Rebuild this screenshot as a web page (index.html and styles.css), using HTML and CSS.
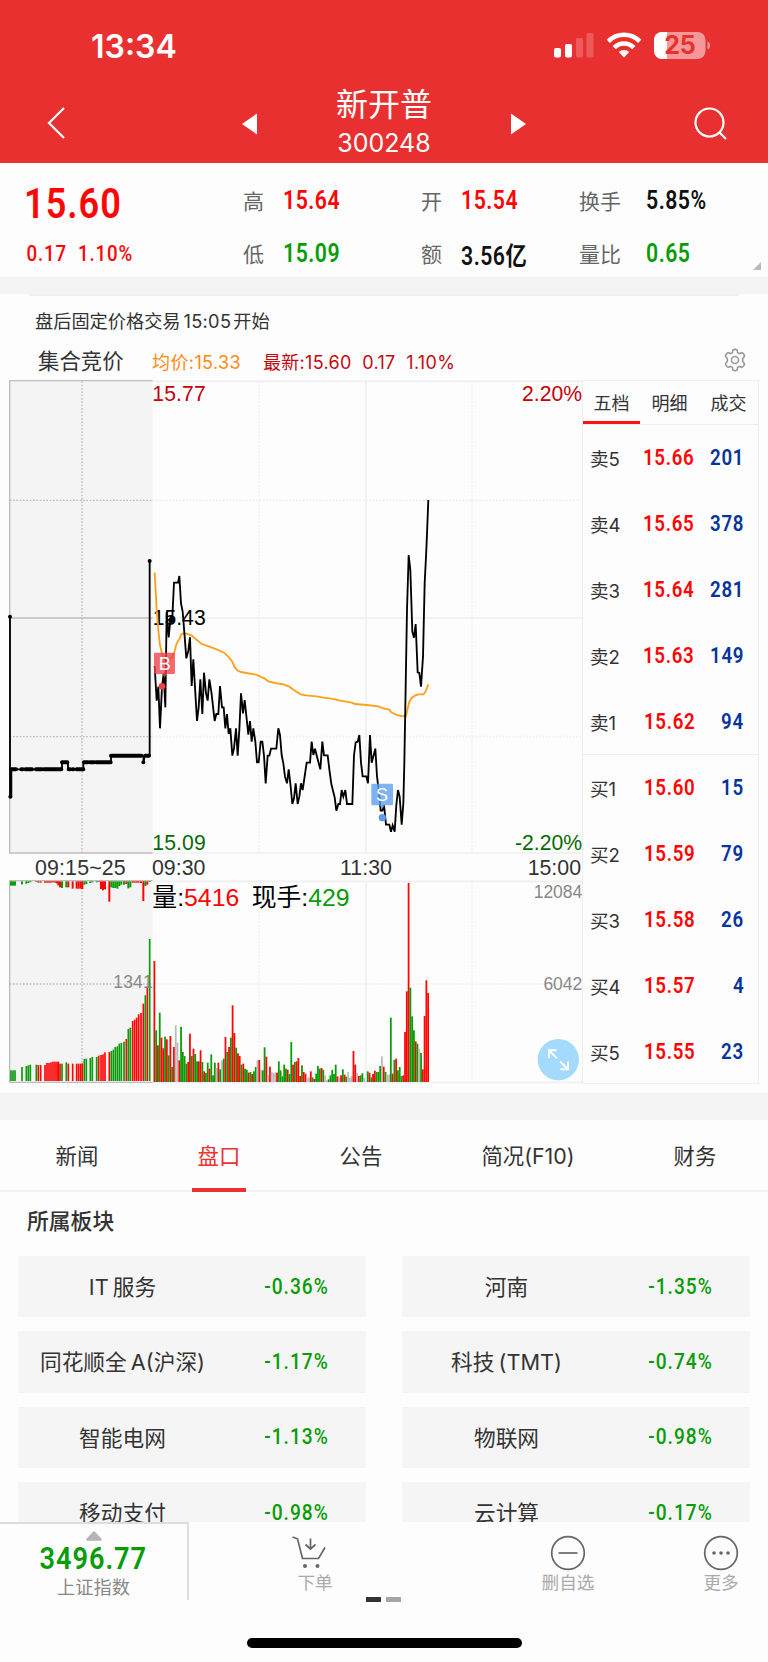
FILE: index.html
```
<!DOCTYPE html>
<html lang="zh-CN">
<head>
  <meta charset="UTF-8" />
  <title>新开普 300248</title>
  <meta name="viewport" content="width=device-width, initial-scale=1.0" />
  <link rel="stylesheet" href="styles.css">
</head>
<body>
  <header class="header">
    <div class="status">
      <span class="status__time">13:34</span>
      <svg class="status__icons" width="160" height="32" viewBox="0 0 160 32" fill="#fff">
        <rect x="3" y="18" width="7" height="9.5" rx="1.8" />
        <rect x="14" y="14" width="7" height="13.5" rx="1.8" />
        <g opacity=".2">
          <rect x="25" y="8" width="7" height="19.5" rx="1.8" />
          <rect x="35.500" y="3" width="7" height="24.5" rx="1.8" />
        </g>
        <g fill="none" stroke="#fff" stroke-width="4.6">
          <path d="M57.300 11.300a22 22 0 0 1 31.400 0" />
          <path d="M63.200 17.600a13.700 13.700 0 0 1 19.600 0" />
        </g>
        <path d="M73 27.500l-5.300-5.400a7.500 7.500 0 0 1 10.600 0z" />
        <rect x="103" y="2" width="51.500" height="27" rx="8" opacity=".5" />
        <path d="M111 2h5v27h-5a8 8 0 0 1-8-8V10a8 8 0 0 1 8-8z" />
        <path d="M156.500 11.500c3.500 1.500 3.500 6.500 0 8z" opacity=".5" />
        <text class="status__battery" x="129" y="24" text-anchor="middle">25</text>
      </svg>
    </div>
    <div class="nav">
      <svg class="nav__back" width="20" height="34" viewBox="0 0 20 34"><path d="M18 2L3 17 18 32" /></svg>
      <svg class="nav__prev" width="15" height="22" viewBox="0 0 15 22"><path d="M0 11L15 .500v21z" /></svg>
      <div class="nav__title">
        <h1>新开普</h1>
        <p>300248</p>
      </div>
      <svg class="nav__next" width="15" height="22" viewBox="0 0 15 22"><path d="M15 11L0 .500v21z" /></svg>
      <svg class="nav__search" width="36" height="36" viewBox="0 0 36 36"><circle cx="16.500" cy="16.500" r="14" /><path d="M26.500 26.500l6.500 6.500" /></svg>
    </div>
  </header>

  <section class="quote">
    <div class="quote__main">
      <b class="num up">15.60</b>
      <span class="num up">0.17&nbsp; 1.10%</span>
    </div>
    <dl class="quote__col col1">
      <dt>高</dt><dd class="num up">15.64</dd>
      <dt>低</dt><dd class="num down">15.09</dd>
    </dl>
    <dl class="quote__col col2">
      <dt>开</dt><dd class="num up">15.54</dd>
      <dt>额</dt><dd class="num">3.56<i>亿</i></dd>
    </dl>
    <dl class="quote__col col3">
      <dt>换手</dt><dd class="num">5.85%</dd>
      <dt>量比</dt><dd class="num down">0.65</dd>
    </dl>
    <span class="quote__more"></span>
  </section>

  <section class="market">
    <p class="notice">盘后固定价格交易<span>15:05</span>开始</p>
    <div class="legend">
      <strong>集合竞价</strong>
      <span class="legend__avg">均价:15.33</span>
      <span class="legend__last">最新:15.60&nbsp; 0.17&nbsp; 1.10%</span>
      <svg class="legend__gear" width="24" height="24" viewBox="0 0 24 24">
        <path d="M9.800 2.200Q12 .600 14.200 2.200L14.600 4.600 16.600 5.600 19 4.700Q21.600 5.800 21.400 8.500L19.700 10.500V13.500L21.400 15.500Q21.600 18.200 19 19.300L16.600 18.400 14.600 19.400 14.200 21.800Q12 23.400 9.800 21.800L9.400 19.400 7.400 18.400 5 19.300Q2.400 18.200 2.600 15.500L4.300 13.500V10.500L2.600 8.500Q2.400 5.800 5 4.700L7.400 5.600 9.400 4.600z" />
        <circle cx="12" cy="12" r="3.500" />
      </svg>
    </div>
    <div class="board">
      <!-- canvas units are 3 per css pixel -->
      <svg class="chart" width="582" height="704" viewBox="0 0 1746 2112">
        <rect class="pre" x="29" y="2" width="429" height="1417" />
        <rect class="pre" x="29" y="1502" width="429" height="604" />
        <g class="grid">
          <path d="M458 4H1746M458 714H1746M458 1419H1746M458 1504H1746M458 2107H1746M1098 4V1419M1098 1504V2107" />
          <path class="dots" d="M458 361H1746M458 1070H1746M458 1812H1746M777 4V1419M1416 4V1419M777 1504V2107M1416 1504V2107" />
        </g>
        <g class="grid grid--pre">
          <path d="M458 2H29V1419H458M29 714H458M29 1500V2107H458M29 1502H458" />
          <path class="dots" d="M29 361H458M29 1070H458M29 1812H458M246 4V1419M246 1504V2107" />
        </g>

        <g id="auction"></g>
        <g id="volume"></g>

        <g class="label">
          <text class="high" x="457" y="64" textLength="160">15.77</text>
          <text class="high" x="1746" y="64" text-anchor="end">2.20%</text>
          <text x="458" y="736" textLength="159">15.43</text>
          <text class="low" x="457" y="1409" textLength="160">15.09</text>
          <text class="low" x="1746" y="1409" text-anchor="end">-2.20%</text>
          <text class="axis" x="105" y="1485" textLength="272">09:15~25</text>
          <text class="axis" x="456" y="1485">09:30</text>
          <text class="axis" x="1098" y="1485" text-anchor="middle">11:30</text>
          <text class="axis" x="1743" y="1485" text-anchor="end">15:00</text>
          <text class="scale" x="340" y="1824" textLength="118">1341</text>
          <text class="scale" x="1747" y="1554" text-anchor="end">12084</text>
          <text class="scale" x="1747" y="1831" text-anchor="end">6042</text>
        </g>
        <text class="total" x="457" y="1578">量:<tspan class="t-up">5416</tspan></text>
        <text class="total" x="755" y="1578">现手:<tspan class="t-down">429</tspan></text>

        <polyline class="auction" points="30,710 30,1250 34,1250 34,1168 186,1168 186,1147 204,1147 204,1168 250,1168 250,1147 333,1147 333,1127 430,1127 431,1147 434,1127 449,1127 449,543" />
        <path class="auction-dots" d="M34 1168H48M64 1168H68M76 1168H96M108 1168H126M132 1168H184M186 1147H202M206 1168H210M218 1168H220M230 1168H250M252 1147H264M270 1147H282M288 1147H332M333 1127H424M436 1127H447M430 1147V1147M449 543V543M30 710V710M31 1250V1250" />
        <polyline class="avg" points="464,578 470,690 475,750 480,795 486,822 495,842 505,840 515,832 522,820 530,790 538,778 543,764 550,760 560,761 575,767 605,792 620,797 650,808 672,818 685,830 697,845 703,860 712,871 722,876 740,879 768,884 780,889 793,895 805,904 825,909 850,913 868,920 878,928 902,943 918,946 950,949 970,953 995,956 1020,962 1055,968 1065,972 1100,975 1135,979 1150,985 1168,989 1174,997 1190,1005 1205,1008 1218,1009 1222,990 1228,965 1235,954 1245,947 1255,943 1270,943 1276,936 1285,913" />
        <polyline class="price" points="464,858 470,962 475,920 480,1045 486,920 491,880 496,982 500,695 506,772 512,710 517,712 522,608 534,608 538,588 543,670 548,695 554,770 559,835 565,812 570,772 575,918 580,838 591,1023 596,982 601,898 607,1002 612,878 618,940 623,962 628,898 634,935 644,1023 649,1002 655,1002 660,918 666,982 671,982 676,1045 681,1002 686,1062 691,1045 697,1127 702,1105 708,1045 713,1127 718,1050 723,940 729,1000 734,960 745,1064 750,1023 755,1085 760,1045 766,1085 771,1147 776,1147 782,1085 787,1085 792,1127 797,1210 803,1127 808,1127 813,1106 829,1106 835,1045 840,1065 845,1125 850,1150 855,1190 861,1210 866,1168 872,1220 877,1272 882,1255 887,1210 893,1272 898,1250 903,1210 908,1230 920,1148 930,1148 935,1085 940,1125 945,1106 951,1130 961,1168 967,1085 972,1126 983,1126 988,1168 994,1212 1004,1252 1009,1292 1015,1272 1020,1272 1025,1230 1030,1250 1036,1230 1041,1272 1057,1272 1062,1126 1067,1087 1073,1085 1078,1065 1083,1148 1088,1189 1099,1189 1104,1210 1110,1065 1115,1148 1126,1106 1131,1189 1136,1230 1142,1292 1147,1292 1152,1275 1158,1334 1168,1334 1173,1355 1178,1336 1184,1355 1189,1275 1194,1230 1199,1250 1205,1334 1210,1270 1213,1150 1217,920 1221,690 1226,525 1231,570 1237,755 1242,773 1247,732 1253,877 1258,879 1263,920 1269,830 1274,610 1279,510 1285,360" />
        <path class="cross" d="M514 708l11 12-11 12-11-12z" />

        <g class="mark mark--buy">
          <path d="M466 818h55a4 4 0 0 1 4 4v56a4 4 0 0 1-4 4h-19l-8 10-8-10h-20a4 4 0 0 1-4-4v-56a4 4 0 0 1 4-4z" />
          <circle cx="486" cy="919" r="10" />
          <text x="494" y="869">B</text>
        </g>
        <g class="mark mark--sell">
          <path d="M1118 1211h57a4 4 0 0 1 4 4v57a4 4 0 0 1-4 4h-20l-8 10-8-10h-21a4 4 0 0 1-4-4v-57a4 4 0 0 1 4-4z" />
          <circle cx="1147" cy="1313" r="11" />
          <text x="1146" y="1263">S</text>
        </g>
        <g class="expand">
          <circle cx="1675" cy="2039" r="62" />
          <path d="M1671 2035l-23-23M1647 2034v-23h23M1680 2044l23 23M1704 2045v23h-23" />
        </g>
      </svg>

      <div class="depth">
        <div class="depth__tabs"><span class="on">五档</span><span>明细</span><span>成交</span></div>
        <ul class="depth__list">
          <li><span>卖5</span><b class="num up">15.66</b><b class="num vol">201</b></li>
          <li><span>卖4</span><b class="num up">15.65</b><b class="num vol">378</b></li>
          <li><span>卖3</span><b class="num up">15.64</b><b class="num vol">281</b></li>
          <li><span>卖2</span><b class="num up">15.63</b><b class="num vol">149</b></li>
          <li><span>卖1</span><b class="num up">15.62</b><b class="num vol">94</b></li>
        </ul>
        <ul class="depth__list">
          <li><span>买1</span><b class="num up">15.60</b><b class="num vol">15</b></li>
          <li><span>买2</span><b class="num up">15.59</b><b class="num vol">79</b></li>
          <li><span>买3</span><b class="num up">15.58</b><b class="num vol">26</b></li>
          <li><span>买4</span><b class="num up">15.57</b><b class="num vol">4</b></li>
          <li><span>买5</span><b class="num up">15.55</b><b class="num vol">23</b></li>
        </ul>
      </div>
    </div>
  </section>

  <section class="info">
    <nav class="tabs">
      <a>新闻</a><a class="on">盘口</a><a>公告</a><a>简况(F10)</a><a>财务</a>
    </nav>
    <h2>所属板块</h2>
    <div class="sectors">
      <div class="sector"><span>IT 服务</span><b class="num down">-0.36%</b></div>
      <div class="sector"><span>河南</span><b class="num down">-1.35%</b></div>
      <div class="sector"><span>同花顺全 A(沪深)</span><b class="num down">-1.17%</b></div>
      <div class="sector"><span>科技 (TMT)</span><b class="num down">-0.74%</b></div>
      <div class="sector"><span>智能电网</span><b class="num down">-1.13%</b></div>
      <div class="sector"><span>物联网</span><b class="num down">-0.98%</b></div>
      <div class="sector"><span>移动支付</span><b class="num down">-0.98%</b></div>
      <div class="sector"><span>云计算</span><b class="num down">-0.17%</b></div>
    </div>
  </section>

  <footer class="footer">
    <div class="toolbar">
      <div class="index">
        <svg width="16" height="10" viewBox="0 0 16 10"><path d="M7 .800q1-1 2 0l6.500 7q.800 2-1 2h-13q-1.800 0-1-2z" fill="#b4b4b4" /></svg>
        <b class="num down">3496.77</b>
        <span>上证指数</span>
      </div>
      <div class="tool tool--order">
        <svg width="36" height="36" viewBox="0 0 36 36">
          <path d="M1.500 2l5 1.800L11.500 23.500h16l6.500-11M19.500 3.500v10.500M14.500 9.500l5 4.500 5-4.500" />
          <g class="solid"><circle cx="14" cy="31" r="2" /><circle cx="26.500" cy="31" r="2" /></g>
        </svg>
        <span>下单</span>
      </div>
      <div class="tool tool--remove">
        <svg width="36" height="36" viewBox="0 0 36 36"><circle cx="18" cy="18" r="16.300" /><path d="M8.500 18h19" /></svg>
        <span>删自选</span>
      </div>
      <div class="tool tool--more">
        <svg width="36" height="36" viewBox="0 0 36 36"><circle cx="18" cy="18" r="16.300" /><g class="solid"><circle cx="11" cy="18" r="1.800" /><circle cx="18" cy="18" r="1.800" /><circle cx="25" cy="18" r="1.800" /></g></svg>
        <span>更多</span>
      </div>
    </div>
    <div class="pager"><i class="on"></i><i></i></div>
    <div class="home"></div>
  </footer>

  <script src="chart.js"></script>
</body>
</html>
```
FILE: styles.css
```
* {
  box-sizing: border-box;
  margin: 0;
  padding: 0;
}
body {
  width: 768px;
  height: 1662px;
  overflow: hidden;
  display: flex;
  flex-direction: column;
  font-family: Inter, "Noto Sans CJK SC", sans-serif;
  background: #fdfdfd;
  color: #333;
}
svg {
  display: block;
  flex: none;
}
ul {
  list-style: none;
}
.num {
  font-family: Roboto, "Noto Sans CJK SC", sans-serif;
  font-weight: 600;
  color: #111;
  transform: scaleX(.85);
  transform-origin: left;
  letter-spacing: .6px;
  white-space: nowrap;
}
.num.up { color: #fd0504; }
.num.down { color: #089c08; }
.num.vol { color: #04349c; }

/* header */
.header {
  height: 163px;
  flex: none;
  background: #e93030;
  color: #fff;
}
.status {
  height: 78px;
  padding: 30px 57px 0 91px;
  display: flex;
  justify-content: space-between;
}
.status__time {
  font-size: 32px;
  font-weight: 600;
  line-height: 34px;
}
.status__battery {
  font-size: 25px;
  font-weight: 700;
  fill: #e93030;
}
.nav {
  height: 85px;
  padding: 0 39px 0 46px;
  display: flex;
  align-items: center;
}
.nav__back, .nav__search {
  fill: none;
  stroke: #fff;
  stroke-width: 2.2;
}
.nav__back { margin-top: 5px; }
.nav__search { margin: 6px 0 0 auto; }
.nav__prev, .nav__next {
  fill: #fff;
  margin-top: 6px;
}
.nav__prev { margin-left: 176px; }
.nav__title {
  width: 254px;
  padding-top: 5px;
  text-align: center;
}
.nav__title h1 {
  font-size: 32px;
  font-weight: 400;
  line-height: 40px;
}
.nav__title p {
  font-size: 25px;
  line-height: 37px;
}

/* quote */
.quote {
  position: relative;
  height: 114px;
  flex: none;
  display: flex;
  padding: 10px 0 0 24px;
}
.quote__main {
  width: 219px;
}
.quote__main b {
  display: block;
  font-size: 42.500px;
  line-height: 62px;
  letter-spacing: 1.200px;
}
.quote__main span {
  display: block;
  font-size: 22px;
  font-weight: 500;
  line-height: 38px;
  padding-left: 3px;
  letter-spacing: 1px;
}
.quote__col {
  display: grid;
  grid-template-columns: 40px 1fr;
  grid-template-rows: 53px 53px;
  align-items: center;
  font-size: 21px;
  color: #666;
}
.quote__col dd {
  font-size: 25px;
  padding-top: 2px;
}
.quote__col i { font-style: normal; }
.col1 { width: 178px; }
.col2 { width: 158px; }
.col3 { grid-template-columns: 67px 1fr; }
.quote__more {
  position: absolute;
  right: 7px;
  bottom: 7px;
  border-left: 8px solid transparent;
  border-bottom: 8px solid #b8b8b8;
}

/* chart block */
.market {
  height: 816px;
  flex: none;
  border-top: 17px solid #f4f4f4;
}
.notice {
  margin: 0 29px;
  border-top: 2px solid #f0f0f0;
  padding: 11px 0 0 6px;
  font-size: 18.2px;
  line-height: 28px;
}
.notice span {
  margin: 0 2px 0 3px;
  letter-spacing: .3px;
}
.legend {
  display: flex;
  align-items: center;
  height: 45px;
  padding: 4px 21px 0 38px;
  font-size: 18px;
}
.legend strong {
  width: 114px;
  font-size: 21.400px;
  font-weight: 400;
}
.legend__avg {
  width: 111px;
  padding-top: 3px;
  color: #ff8a12;
  letter-spacing: .4px;
}
.legend__last {
  padding-top: 3px;
  color: #c40a12;
  letter-spacing: .3px;
}
.legend__gear {
  margin-left: auto;
  fill: none;
  stroke: #999;
  stroke-width: 1.6;
}
.board {
  display: flex;
  height: 704px;
}
.pre { fill: #f4f4f4; }
.grid {
  fill: none;
  stroke: #f0f0f0;
  stroke-width: 5;
}
.grid--pre {
  stroke: #bdbdbd;
  stroke-width: 4;
}
.dots { stroke-dasharray: 5 5; }
.label {
  font-family: "Liberation Sans", sans-serif;
  font-size: 63.5px;
  fill: #000;
}
.label .high { fill: #c40008; }
.label .low { fill: #056b05; }
.label .axis { fill: #333; font-size: 64px; }
.label .scale { fill: #888; font-size: 52.5px; }
.total {
  font-family: "Liberation Sans", "Noto Sans CJK SC", sans-serif;
  font-size: 74.5px;
}
.t-up { fill: #fd0504; }
.t-down { fill: #089c08; }
.bar-r { fill: #fd0504; }
.bar-g { fill: #089c08; }
.bar-n { fill: #bbb; }
.price, .avg, .auction, .auction-dots {
  fill: none;
  stroke: #000;
  stroke-width: 5.5;
}
.avg { stroke: #ffa01e; }
.auction-dots {
  stroke-width: 12;
  stroke-linecap: round;
}
.mark { fill: #ee4048; }
.mark path { opacity: .78; }
.mark--sell { fill: #5a9df0; }
.mark text {
  font-family: "Liberation Sans", sans-serif;
  font-size: 54px;
  text-anchor: middle;
  fill: #fff;
}
.expand circle { fill: #a5daff; }
.expand path {
  fill: none;
  stroke: #fff;
  stroke-width: 6;
}

/* order book */
.depth {
  width: 177px;
  border: 1px solid #eee;
}
.depth__tabs {
  display: flex;
  height: 44px;
  font-size: 18px;
  line-height: 45px;
  text-align: center;
  border-bottom: 1px solid #eee;
}
.depth__tabs span { width: 60px; }
.depth__tabs .on {
  width: 58px;
  border-bottom: 3px solid #fd1010;
}
.depth__list + .depth__list { border-top: 1px solid #eee; }
.depth__list li {
  display: flex;
  align-items: center;
  height: 65.8px;
  padding: 0 14px 0 7px;
}
.depth__list span {
  width: 54px;
  font-size: 18.600px;
}
.depth__list .num {
  font-size: 22px;
  font-weight: 600;
  letter-spacing: .8px;
}
.depth__list .vol {
  margin-left: auto;
  transform-origin: right;
}

/* tabs and sectors */
.info {
  flex: 1;
  border-top: 27px solid #f4f4f4;
}
.tabs {
  display: flex;
  height: 72px;
  padding-left: 50px;
  border-bottom: 2px solid #f1f1f1;
  font-size: 21.400px;
  line-height: 73px;
}
.tabs a {
  width: 54px;
  text-align: center;
  margin-right: 88px;
}
.tabs a:nth-child(4) {
  width: 106px;
  margin: 0 87px 0 -1px;
}
.tabs a:last-child { margin: 0; }
.tabs .on {
  height: 72px;
  color: #ee3030;
  border-bottom: 4px solid #ee3030;
}
.info h2 {
  padding: 12px 0 0 27px;
  font-size: 21.800px;
  font-weight: 500;
  line-height: 34px;
}
.sectors {
  display: grid;
  grid-template-columns: 348px 348px;
  gap: 14px 36px;
  padding: 18px 18px 0;
}
.sector {
  display: grid;
  grid-template-columns: 209px 139px;
  align-items: center;
  height: 61.300px;
  padding-bottom: 2px;
  background: #f5f5f5;
  text-align: center;
  font-size: 21.700px;
  word-spacing: -2px;
}
.sector .num {
  font-size: 22.500px;
  font-weight: 500;
  letter-spacing: 1.200px;
  transform-origin: center;
}

/* footer */
.footer {
  position: absolute;
  left: 0;
  top: 1522px;
  width: 768px;
  height: 140px;
  background: #fdfdfd;
}
.toolbar {
  display: flex;
  height: 78px;
}
.index {
  width: 189px;
  border: 2px solid #ddd;
  border-width: 2px 2px 0 0;
  display: flex;
  flex-direction: column;
  align-items: center;
  padding-top: 7px;
}
.index .num {
  font-size: 32px;
  line-height: 34px;
  letter-spacing: 1.100px;
  transform-origin: center;
}
.index span {
  font-size: 18.200px;
  line-height: 25px;
  color: #888;
}
.tool {
  padding-top: 13px;
  display: flex;
  flex-direction: column;
  align-items: center;
  font-size: 17.600px;
  line-height: 24px;
  color: #aaa;
}
.tool svg {
  fill: none;
  stroke: #666;
  stroke-width: 1.7;
}
.tool .solid { fill: #666; stroke: none; }
.tool--order { margin-left: 102px; width: 36px; }
.tool--order span { margin: 0 -12px 0 0; white-space: nowrap; }
.tool--remove { margin-left: 214px; width: 54px; }
.tool--more { margin-left: 108px; width: 36px; }
.pager {
  display: flex;
  justify-content: center;
  gap: 5px;
  height: 36px;
  margin-top: -3px;
  padding-right: 1px;
}
.pager i {
  width: 15px;
  height: 5px;
  background: #a5a5a5;
}
.pager .on { background: #333; }
.home {
  width: 275px;
  height: 10px;
  margin: 5px auto 0;
  border-radius: 5px;
  background: #000;
}
```
FILE: chart.js
```
const svgNS = 'http://www.w3.org/2000/svg';

function bar(parent, x, y, w, h, type) {
  const rect = document.createElementNS(svgNS, 'rect');
  rect.setAttribute('x', x);
  rect.setAttribute('y', y);
  rect.setAttribute('width', w);
  rect.setAttribute('height', h);
  rect.setAttribute('class', 'bar-' + type);
  parent.appendChild(rect);
}

// one entry per minute: height + r (up), g (down), n (flat)
const minutes = `363r 155g 110r 208g 133r 101r 136g 128r 80g 138r 45g 105r 170n 118n 65r 165g 90g 78g 55g 60r
145r 78g 100r 84g 62g 62r 95r 60g 32r 27g 58g 40r 83g 20g 58g 42n 58r 38g 65n 70g
135r 90g 105r 133g 230r 147r 103g 86r 78r 52g 55r 40g 37g 28r 30g 24r 32g 45g 65n 66r
37n 35g 104g 76r 20n 46r 30n 27n 28n 28r 62g 35g 17g 52g 40g 37r 24g 120g 52r 60g
62r 72r 18r 50g 30r 25r 12n 14n 32r 14g 9r 25g 48g 40g 42r 37g 20n 5n 8g 20g
36g 24g 52g 17r 12n 20r 38g 22r 16g 30n 12n 18n 93r 52r 27n 18r 20g 26g 13n 1n
32g 28r 14g 24r 34r 30g 30g 48g 77n 46r 30g 22n 22n 193g 25r 66g 70r 35g 45g 18g
20r 150r 272r 597r 283g 197g 155g 122r 115g 100n 87g 38r 198r 305r 267r`.split(/\s+/);

const volume = document.getElementById('volume');
minutes.forEach((m, i) => {
  const h = parseInt(m);
  bar(volume, 460.5 + i * 5.333, 2106 - h, 5.333, h, m.slice(-1));
});

// x, matched height, unmatched height, colour
const auction = [
  [33, 32, 13, 'g'], [39, 32, 13, 'g'], [45, 32, 13, 'g'], [66, 42, 9, 'g'], [79, 45, 7, 'g'], [85, 47, 5, 'g'],
  [91, 49, 3, 'g'], [109, 49, 2, 'g'], [115, 48, 4, 'r'], [122, 48, 4, 'r'], [135, 48, 4, 'r'], [141, 54, 4, 'r'],
  [147, 54, 4, 'r'], [153, 56, 4, 'r'], [159, 58, 3, 'r'], [165, 58, 4, 'r'], [171, 58, 6, 'r'], [175, 58, 12, 'r'],
  [180, 52, 18, 'r'], [186, 52, 20, 'g'], [199, 56, 18, 'g'], [205, 52, 18, 'r'], [218, 52, 22, 'r'], [230, 52, 22, 'r'],
  [236, 52, 22, 'r'], [242, 52, 22, 'r'], [247, 53, 23, 'r'], [253, 66, 10, 'g'], [259, 67, 8, 'g'], [271, 69, 5, 'g'],
  [277, 72, 3, 'g'], [290, 72, 3, 'g'], [296, 76, 2, 'r'], [303, 78, 23, 'r'], [309, 80, 27, 'r'], [315, 86, 24, 'r'],
  [328, 87, 61, 'r'], [334, 90, 18, 'g'], [340, 94, 20, 'g'], [346, 102, 20, 'g'], [352, 104, 22, 'g'], [358, 112, 14, 'g'],
  [364, 114, 10, 'g'], [372, 118, 10, 'g'], [379, 126, 8, 'r'], [385, 156, 21, 'g'], [391, 160, 18, 'g'], [398, 180, 4, 'r'],
  [404, 184, 4, 'r'], [410, 190, 4, 'r'], [416, 200, 4, 'r'], [423, 204, 5, 'r'], [430, 232, 59, 'r'], [436, 257, 14, 'g'],
  [442, 280, 10, 'r'], [449, 426, 2, 'g']
];
const pre = document.getElementById('auction');
auction.forEach(([x, h, rest, type]) => {
  bar(pre, x - 2.5, 2103 - h, 5, h, type);
  bar(pre, x - 3, 1504, 6, rest, type);
});
```
